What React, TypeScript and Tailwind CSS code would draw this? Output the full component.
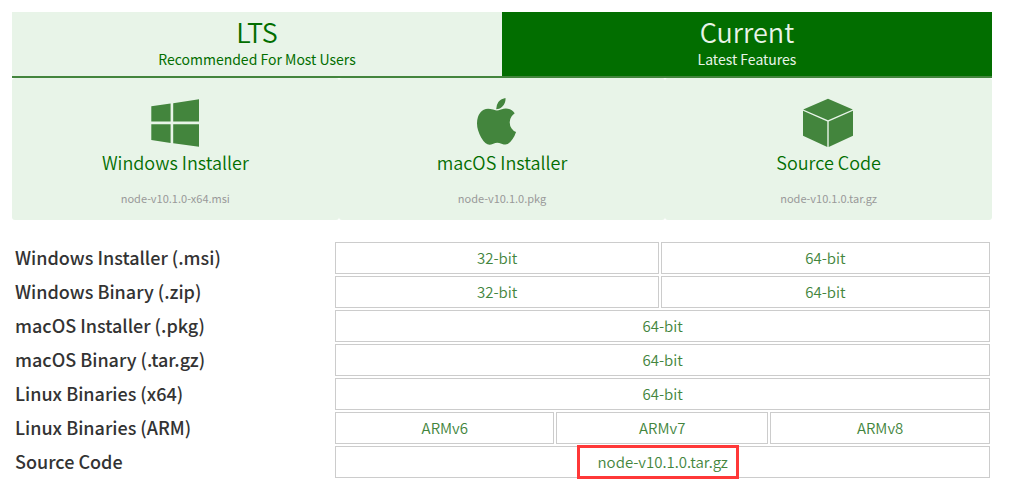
import type { ReactNode } from "react";

function WindowsIcon() {
  return (
    <svg viewBox="0 0 50 50" className="size-[50px]" fill="currentColor" aria-hidden="true">
      <path d="M1.3 9.3 20.6 6.6V24.6H1.3zM23.2 6.2 49 2.2V24.6H23.2zM1.3 27.3H20.6V45.9L1.3 43.1zM23.2 27.3H49V49.8L23.2 46.2z" />
    </svg>
  );
}

function AppleIcon() {
  return (
    <svg viewBox="0 0 50 50" className="size-[50px]" fill="currentColor" aria-hidden="true">
      <path d="M39.054 35.065q-1.093 3.504-3.448 7.009-3.617 5.495-7.205 5.495-1.374 0-3.925-.897-2.411-.897-4.233-.897-1.71 0-3.981.925-2.271.953-3.7.953-4.261 0-8.439-7.261-4.121-7.317-4.121-14.102 0-6.392 3.168-10.485 3.14-4.037 7.962-4.037 2.019 0 4.962.841 2.916.841 3.869.841 1.262 0 4.009-.953 2.86-.953 4.85-.953 3.336 0 5.972 1.822 1.458 1.009 2.916 2.804-2.215 1.878-3.196 3.308-1.822 2.635-1.822 5.804 0 3.476 1.934 6.252t4.43 3.533zM28.542 2.149q0 1.71-.813 3.813-.841 2.103-2.607 3.869-1.514 1.514-3.028 2.019-1.037.308-2.916.477.084-4.177 2.187-7.205 2.075-3 7.009-4.149l.056.182.056.448q.056.308.056.546z" />
    </svg>
  );
}

function BoxIcon() {
  return (
    <svg viewBox="0 0 50 50" className="size-[50px] overflow-visible" fill="currentColor" aria-hidden="true">
      <path d="M24 1.8 48.8 12.4 24 23.2-.8 12.4zM-1 13.8 23.3 24.5V50L-1 38.8zM49 13.8 24.7 24.5V50L49 38.8z" />
    </svg>
  );
}

const installers: { icon: ReactNode; name: string; file: string }[] = [
  { icon: <WindowsIcon />, name: "Windows Installer", file: "node-v10.1.0-x64.msi" },
  { icon: <AppleIcon />, name: "macOS Installer", file: "node-v10.1.0.pkg" },
  { icon: <BoxIcon />, name: "Source Code", file: "node-v10.1.0.tar.gz" },
];

type Cell = { label: string; span: number; marked?: boolean };

const rows: { name: string; cells: Cell[] }[] = [
  { name: "Windows Installer (.msi)", cells: [{ label: "32-bit", span: 2 }, { label: "64-bit", span: 2 }] },
  { name: "Windows Binary (.zip)", cells: [{ label: "32-bit", span: 2 }, { label: "64-bit", span: 2 }] },
  { name: "macOS Installer (.pkg)", cells: [{ label: "64-bit", span: 4 }] },
  { name: "macOS Binary (.tar.gz)", cells: [{ label: "64-bit", span: 4 }] },
  { name: "Linux Binaries (x64)", cells: [{ label: "64-bit", span: 4 }] },
  {
    name: "Linux Binaries (ARM)",
    cells: [{ label: "ARMv6", span: 1 }, { label: "ARMv7", span: 2 }, { label: "ARMv8", span: 1 }],
  },
  { name: "Source Code", cells: [{ label: "node-v10.1.0.tar.gz", span: 4, marked: true }] },
];

export default function App() {
  return (
    <main className="bg-white pt-3 pr-[25px] pl-3 font-['Source_Sans_Pro','Noto_Sans_CJK_SC',sans-serif] font-[350] text-[#333333]">
      <nav className="grid grid-cols-2 border-b-2 border-[#43853d] text-center">
        <a href="#lts" className="flex h-16 flex-col items-center bg-[#e8f4e8] pt-1 text-[#026e00]">
          <span className="text-[27px] leading-8">LTS</span>
          <span className="text-sm leading-[22px] font-normal">Recommended For Most Users</span>
        </a>
        <a href="#current" className="flex h-16 flex-col items-center bg-[#026e00] pt-1 text-[#e8f4e8]">
          <span className="text-[27px] leading-8">Current</span>
          <span className="text-sm leading-[22px] font-normal">Latest Features</span>
        </a>
      </nav>

      <ul className="grid grid-cols-3 text-center">
        {installers.map((item) => (
          <li key={item.name} className="rounded-[3px] bg-[#e8f4e8]">
            <a href="#download" className="flex flex-col items-center pt-[19px] pb-[14px] text-[#43853d]">
              {item.icon}
              <span className="mt-[3px] text-lg leading-6 text-[#026e00]">{item.name}</span>
              <span className="mt-4 text-[11px] leading-4 font-normal text-[#999999]">{item.file}</span>
            </a>
          </li>
        ))}
      </ul>

      <table className="mt-5 w-full table-fixed border-separate border-spacing-[2px]">
        <colgroup>
          <col className="w-[33%]" />
          <col className="w-[22.6%]" />
          <col className="w-[10.6%]" />
          <col className="w-[11.1%]" />
          <col />
        </colgroup>
        <tbody>
          {rows.map((row) => (
            <tr key={row.name} className="h-8">
              <th scope="row" className="px-px pt-0 pb-[2px] text-left text-lg leading-6 font-medium">
                {row.name}
              </th>
              {row.cells.map((cell, i) => (
                <td
                  key={i}
                  colSpan={cell.span}
                  className="relative border border-[#cccccc] p-0 text-center text-[15px] leading-5 text-[#43853d]"
                >
                  <a href="#download">{cell.label}</a>
                  {cell.marked && (
                    <span className="pointer-events-none absolute -inset-y-[2px] left-[36.9%] w-[162px] border-3 border-[#ff3838]" />
                  )}
                </td>
              ))}
            </tr>
          ))}
        </tbody>
      </table>
    </main>
  );
}
